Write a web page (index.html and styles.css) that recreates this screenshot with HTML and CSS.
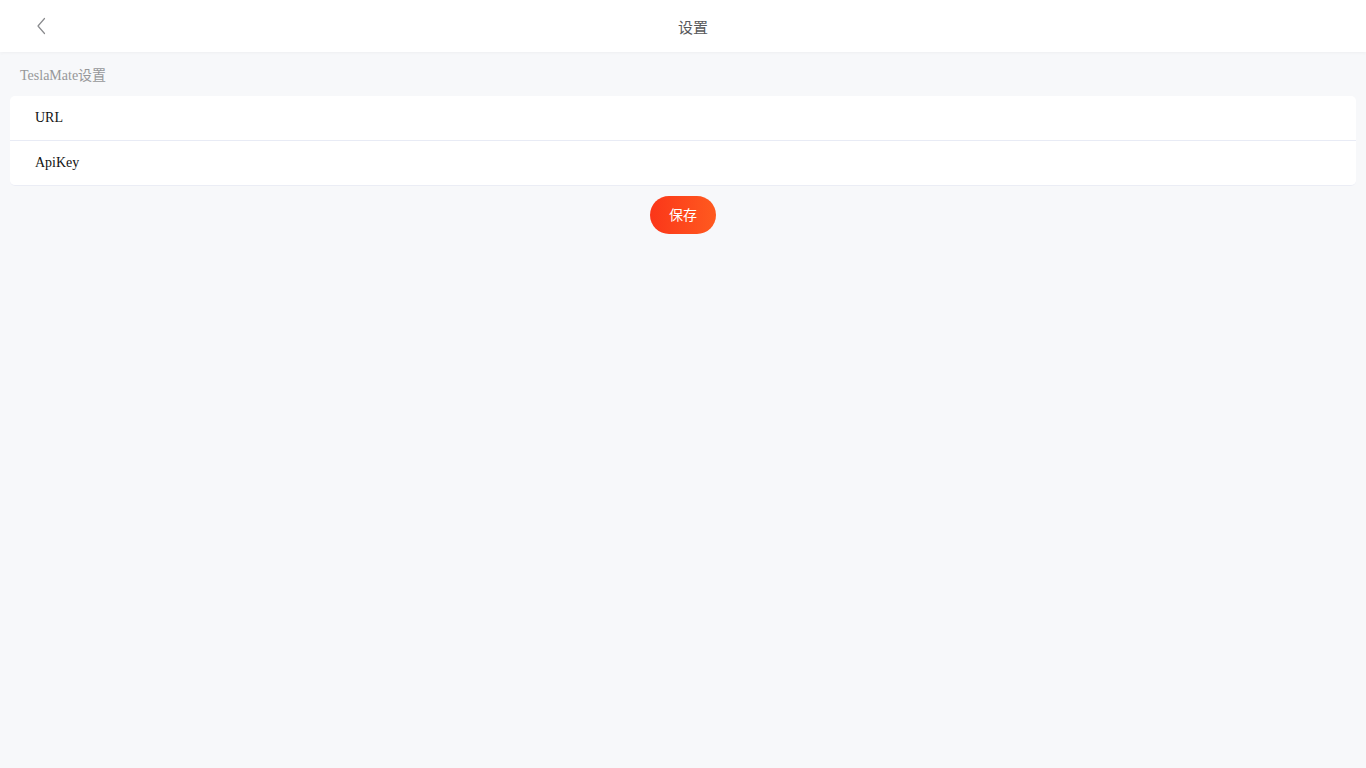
FILE: index.html
```html
<!DOCTYPE html>
<html lang="zh-CN">
<head>
<meta charset="utf-8">
<title>设置</title>
<link rel="stylesheet" href="styles.css">
</head>
<body>
<header class="navbar">
  <div class="nav-left">
    <svg class="back-icon" width="12" height="18" viewBox="0 0 12 18" aria-hidden="true">
      <path d="M9.5 1.5 L3 9 L9.5 16.5" fill="none" stroke="#8a8b8e" stroke-width="1.2" stroke-linecap="round" stroke-linejoin="round"/>
    </svg>
  </div>
  <div class="nav-title">设置</div>
  <div class="nav-right"></div>
</header>
<main class="content">
  <div class="group-title">TeslaMate设置</div>
  <div class="card">
    <div class="cell">URL</div>
    <div class="cell">ApiKey</div>
  </div>
  <div class="actions">
    <button class="save-btn"><span class="save-label">保存</span></button>
  </div>
</main>
</body>
</html>
```
FILE: styles.css
```css
* { box-sizing: border-box; }
html, body {
  margin: 0;
  padding: 0;
  height: 100%;
}
body {
  background: #f7f8fa;
  font-family: "Liberation Serif", "Noto Sans CJK SC", serif;
  font-size: 14px;
  color: #1a1a1a;
}
.navbar {
  height: 52px;
  background: #ffffff;
  display: flex;
  align-items: center;
  box-shadow: 0 1px 3px rgba(100, 101, 102, 0.06);
  position: relative;
}
.nav-left {
  width: 84px;
  padding-left: 35px;
  display: flex;
  align-items: center;
  height: 100%;
}
.back-icon { display: block; margin-top: -1px; }
.nav-title {
  flex: 1;
  text-align: center;
  font-family: "Noto Sans CJK SC", sans-serif;
  font-size: 15px;
  color: #58595b;
  line-height: 20px;
  padding-top: 2px;
}
.nav-right { width: 64px; }
.content { padding: 0 10px; }
.group-title {
  padding: 14px 10px 10px;
  line-height: 20px;
  color: #969799;
  font-size: 14px;
}
.card {
  background: #ffffff;
  border-radius: 5px;
  overflow: hidden;
  border-bottom: 1px solid #ebedf5;
}
.cell {
  height: 44px;
  line-height: 43px;
  padding-left: 25px;
  color: #111111;
  font-size: 14px;
}
.cell + .cell { border-top: 1px solid #e8ebf5; height: 45px; line-height: 43px; }
.actions {
  display: flex;
  justify-content: center;
  padding-top: 10px;
}
.save-btn {
  width: 66px;
  height: 38px;
  border: none;
  border-radius: 19px;
  background: linear-gradient(90deg, #fb3619 0%, #ff5a1f 100%);
  color: #ffffff;
  font-family: "Noto Sans CJK SC", sans-serif;
  font-size: 14px;
  padding: 0;
  display: flex;
  align-items: center;
  justify-content: center;
}
.save-label {
  display: block;
  line-height: 20px;
  margin-top: -2px;
}
```
